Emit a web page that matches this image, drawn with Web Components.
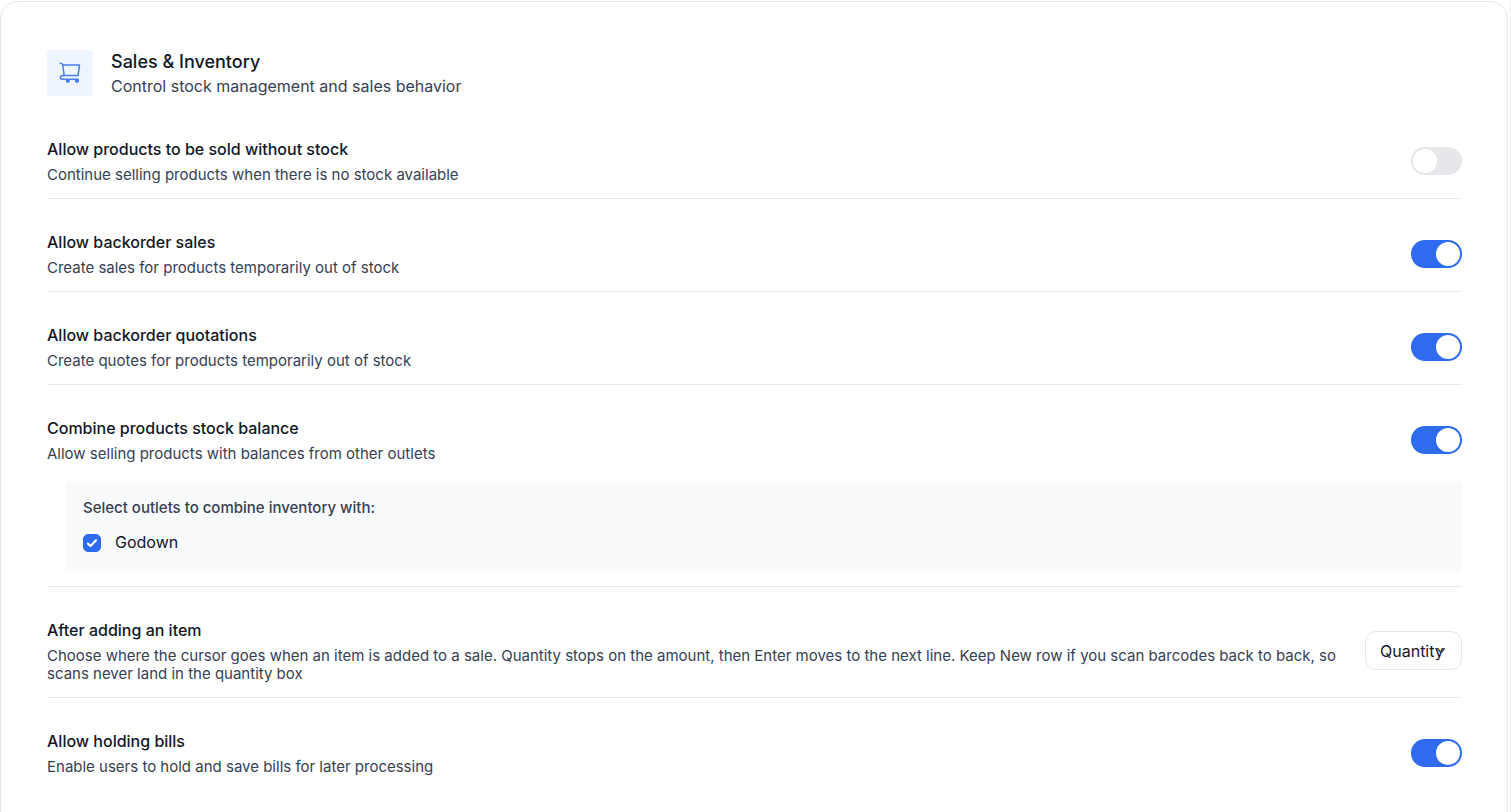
<!DOCTYPE html>
<html lang="en">
<head>
<meta charset="utf-8">
<meta name="viewport" content="width=device-width, initial-scale=1">
<title>Sales &amp; Inventory</title>
<style>
html { background: #fff; }
body { margin: 0; padding: 1px 0 0; border-right: 1px solid #ececf1; font-family: Inter, "Liberation Sans", sans-serif; font-size: 16px; color: #101828; }
</style>
</head>
<body>
<settings-card>
  <section-header heading="Sales &amp; Inventory" subtitle="Control stock management and sales behavior"></section-header>
  <setting-row heading="Allow products to be sold without stock" description="Continue selling products when there is no stock available">
    <toggle-switch slot="control" label="Allow products to be sold without stock"></toggle-switch>
  </setting-row>
  <setting-row heading="Allow backorder sales" description="Create sales for products temporarily out of stock">
    <toggle-switch slot="control" label="Allow backorder sales" checked></toggle-switch>
  </setting-row>
  <setting-row heading="Allow backorder quotations" description="Create quotes for products temporarily out of stock">
    <toggle-switch slot="control" label="Allow backorder quotations" checked></toggle-switch>
  </setting-row>
  <setting-row heading="Combine products stock balance" description="Allow selling products with balances from other outlets">
    <toggle-switch slot="control" label="Combine products stock balance" checked></toggle-switch>
    <outlet-panel heading="Select outlets to combine inventory with:">
      <check-option label="Godown" checked></check-option>
    </outlet-panel>
  </setting-row>
  <setting-row heading="After adding an item" description="Choose where the cursor goes when an item is added to a sale. Quantity stops on the amount, then Enter moves to the next line. Keep New row if you scan barcodes back to back, so scans never land in the quantity box">
    <select-box slot="control" label="After adding an item" options="Quantity"></select-box>
  </setting-row>
  <setting-row heading="Allow holding bills" description="Enable users to hold and save bills for later processing">
    <toggle-switch slot="control" label="Allow holding bills" checked></toggle-switch>
  </setting-row>
</settings-card>
<script>
class BaseElement extends HTMLElement {
  mount(html) {
    const template = document.createElement('template');
    template.innerHTML = '<style>*,*::before{box-sizing:border-box}</style>' + html;
    this.attachShadow({ mode: 'open' }).append(template.content.cloneNode(true));
  }
  fill(selector, attribute) {
    this.shadowRoot.querySelector(selector).textContent = this.getAttribute(attribute);
  }
}

customElements.define('settings-card', class extends BaseElement {
  connectedCallback() {
    this.mount(`<style>
      :host { display: block; box-sizing: border-box; min-height: 100vh; margin-right: 2px; padding: 48px 45px 46px 46px; border: 1px solid #e5e7eb; border-radius: 18px; background: #fff; }
    </style><slot></slot>`);
  }
});

customElements.define('section-header', class extends BaseElement {
  connectedCallback() {
    this.mount(`<style>
      :host { display: flex; align-items: flex-start; gap: 18px; padding-bottom: 8px; }
      .badge { display: grid; place-items: center; width: 46px; height: 46px; border-radius: 4px; background: #eff5ff; color: #4680f6; }
      svg { display: block; }
      h2 { margin: 0; font-size: 18px; line-height: 24px; font-weight: 500; }
      p { margin: 0; line-height: 24px; color: #364153; }
    </style>
    <div class="badge"><svg width="22" height="22" viewBox="0 0 22 22" fill="none" stroke="currentColor" stroke-width="1.5" stroke-linecap="round" stroke-linejoin="round" aria-hidden="true">
      <path d="M1.2 1.3 3.6 2.1 5.2 13.6M3.9 3H20.5L19 13.6H4.2C.6 13.6.6 17.2 3.4 17.2H19"/>
      <circle cx="8.8" cy="18.8" r="1.4" fill="currentColor"/><circle cx="18" cy="18.8" r="1.4" fill="currentColor"/>
    </svg></div>
    <div><h2></h2><p></p></div>`);
    this.fill('h2', 'heading');
    this.fill('p', 'subtitle');
  }
});

customElements.define('setting-row', class extends BaseElement {
  connectedCallback() {
    this.mount(`<style>
      :host { display: block; padding: 31px 0 14px; border-bottom: 1px solid #e8e9ed; }
      :host(:last-of-type) { border-bottom: 0; }
      .main { display: flex; align-items: center; gap: 20px; }
      .text { flex: 1; min-width: 0; }
      h3 { margin: 0 0 5px; font-size: 16px; line-height: 24px; font-weight: 500; }
      p { margin: 0; font-size: 15px; line-height: 18px; color: #364153; }
    </style>
    <div class="main"><div class="text"><h3></h3><p></p></div><slot name="control"></slot></div>
    <slot></slot>`);
    this.fill('h3', 'heading');
    this.fill('p', 'description');
  }
});

customElements.define('toggle-switch', class extends BaseElement {
  connectedCallback() {
    this.mount(`<style>
      :host { display: block; flex: none; }
      input { appearance: none; display: flex; align-items: center; width: 51px; height: 28px; margin: 0; padding: 2px; border-radius: 14px; background: #e5e7eb; cursor: pointer; }
      input::before { content: ""; width: 24px; height: 24px; border-radius: 50%; background: #fff; }
      input:checked { justify-content: flex-end; background: #2f6bee; }
    </style><input type="checkbox" role="switch">`);
    const input = this.shadowRoot.querySelector('input');
    input.checked = this.hasAttribute('checked');
    input.setAttribute('aria-label', this.getAttribute('label'));
  }
});

customElements.define('outlet-panel', class extends BaseElement {
  connectedCallback() {
    this.mount(`<style>
      :host { display: block; margin: 18px 0 0 18px; padding: 18px; border-radius: 4px; background: #f9fafc; }
      h4 { margin: 0 0 14px; font-size: 15px; line-height: 18px; font-weight: 500; color: #364153; }
    </style><h4></h4><slot></slot>`);
    this.fill('h4', 'heading');
  }
});

customElements.define('check-option', class extends BaseElement {
  connectedCallback() {
    this.mount(`<style>
      :host { display: block; }
      label { display: flex; align-items: center; gap: 14px; line-height: 23px; }
      .box { display: grid; width: 18px; height: 18px; }
      .box > * { grid-area: 1 / 1; }
      input { appearance: none; width: 18px; height: 18px; margin: 0; border: 1px solid #d1d5dc; border-radius: 5px; background: #fff; }
      input:checked { border-color: #2f6bee; background: #2f6bee; }
      svg { pointer-events: none; visibility: hidden; }
      input:checked + svg { visibility: visible; }
    </style>
    <label><span class="box"><input type="checkbox"><svg width="18" height="18" viewBox="0 0 18 18" fill="none" stroke="#fff" stroke-width="2.2" stroke-linecap="round" stroke-linejoin="round" aria-hidden="true"><path d="m5 9.6 2.5 2.4L13 6.3"/></svg></span><span class="name"></span></label>`);
    this.shadowRoot.querySelector('input').checked = this.hasAttribute('checked');
    this.fill('.name', 'label');
  }
});

customElements.define('select-box', class extends BaseElement {
  connectedCallback() {
    this.mount(`<style>
      :host { display: grid; flex: none; }
      select, svg { grid-area: 1 / 1; }
      select { appearance: none; width: 97px; height: 39px; margin: 0; padding: 0 14px; border: 1px solid #e5e7eb; border-radius: 11px; background: #fff; font: inherit; line-height: 24px; color: inherit; }
      svg { align-self: center; justify-self: end; margin-right: 16px; pointer-events: none; }
    </style>
    <select></select>
    <svg width="10" height="8" viewBox="0 0 10 8" fill="none" stroke="#364153" stroke-width="1.5" stroke-linecap="round" stroke-linejoin="round" aria-hidden="true"><path d="m1.5 1.5 3.5 4 3.5-4"/></svg>`);
    const select = this.shadowRoot.querySelector('select');
    select.setAttribute('aria-label', this.getAttribute('label'));
    for (const name of this.getAttribute('options').split(',')) select.add(new Option(name));
  }
});
</script>
</body>
</html>
